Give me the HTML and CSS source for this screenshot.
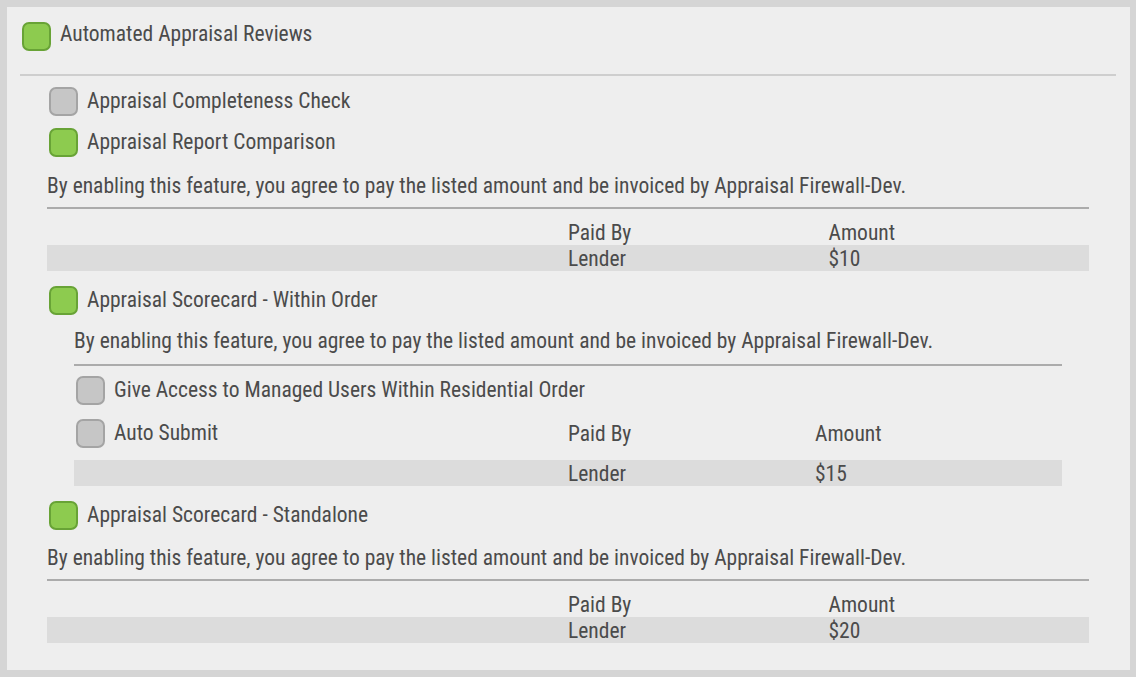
FILE: index.html
```html
<!DOCTYPE html>
<html lang="en">
<head>
<meta charset="utf-8">
<title>Automated Appraisal Reviews</title>
<link rel="stylesheet" href="styles.css">
</head>
<body>
<div class="panel">
  <div class="check-row head">
    <span class="box on"></span>
    <span class="label">Automated Appraisal Reviews</span>
  </div>
  <div class="top-rule"></div>

  <div class="content">
    <div class="check-row r1">
      <span class="box off"></span>
      <span class="label">Appraisal Completeness Check</span>
    </div>
    <div class="check-row r2">
      <span class="box on"></span>
      <span class="label">Appraisal Report Comparison</span>
    </div>
    <p class="note">By enabling this feature, you agree to pay the listed amount and be invoiced by Appraisal Firewall-Dev.</p>
    <div class="rule"></div>
    <div class="fee">
      <div class="fee-row head-row"><span></span><span>Paid By</span><span>Amount</span></div>
      <div class="fee-row data-row"><span></span><span>Lender</span><span>$10</span></div>
    </div>

    <div class="check-row r3">
      <span class="box on"></span>
      <span class="label">Appraisal Scorecard - Within Order</span>
    </div>
    <div class="nested">
      <p class="note">By enabling this feature, you agree to pay the listed amount and be invoiced by Appraisal Firewall-Dev.</p>
      <div class="rule"></div>
      <div class="check-row r-access">
        <span class="box off"></span>
        <span class="label">Give Access to Managed Users Within Residential Order</span>
      </div>
      <div class="fee nested-fee">
        <div class="fee-row head-row tall">
          <span class="check-row"><span class="box off"></span><span class="label">Auto Submit</span></span>
          <span>Paid By</span><span>Amount</span>
        </div>
        <div class="fee-row data-row spaced"><span></span><span>Lender</span><span>$15</span></div>
      </div>
    </div>

    <div class="check-row r4">
      <span class="box on"></span>
      <span class="label">Appraisal Scorecard - Standalone</span>
    </div>
    <p class="note n3">By enabling this feature, you agree to pay the listed amount and be invoiced by Appraisal Firewall-Dev.</p>
    <div class="rule"></div>
    <div class="fee">
      <div class="fee-row head-row"><span></span><span>Paid By</span><span>Amount</span></div>
      <div class="fee-row data-row"><span></span><span>Lender</span><span>$20</span></div>
    </div>
  </div>
</div>
</body>
</html>
```

FILE: styles.css
```css
html, body {
  margin: 0;
  padding: 0;
}
body {
  background: #d5d5d5;
  padding: 7px 6px 7px 7px;
  width: 1136px;
  height: 677px;
  box-sizing: border-box;
  font-family: "Roboto Condensed", "Liberation Sans Narrow", "Arial Narrow", Roboto, sans-serif;
  font-size: 21.5px;
  color: #4b4b4b;
}
.panel {
  background: #eeeeee;
  height: 663px;
  box-sizing: border-box;
  padding: 15px 0 26px 0;
}
.check-row {
  display: flex;
  align-items: center;
  gap: 9px;
  height: 29px;
}
.label {
  line-height: 24px;
  white-space: nowrap;
  position: relative;
  top: -1px;
}
.head .label {
  top: -3px;
}
.box {
  flex: none;
  width: 29px;
  height: 29px;
  box-sizing: border-box;
  border-radius: 7px;
  border: 2px solid;
}
.box.on {
  background: #8dcb4f;
  border-color: #68a336;
}
.box.off {
  background: #c6c6c6;
  border-color: #a4a4a4;
}
.head {
  margin-left: 15px;
}
.top-rule {
  height: 2px;
  background: #cecece;
  margin: 23px 14px 0 13px;
}
.content {
  margin: 0 41px 0 40px;
}
.content > .check-row {
  margin-left: 2px;
}
.r1 { margin-top: 11px; }
.r2 { margin-top: 12px; }
.r3 { margin-top: 15px; }
.r4 { margin-top: 15px; }
.note {
  margin: 17px 0 0 0;
  line-height: 24px;
  white-space: nowrap;
}
.n3 { margin-top: 16px; }
.rule {
  height: 2px;
  background: #ababab;
  margin-top: 9px;
}
.fee {
  margin-top: 10px;
}
.fee-row {
  display: grid;
  grid-template-columns: 2fr 1fr 1fr;
  height: 26px;
  box-sizing: border-box;
  padding-top: 2px;
  line-height: 24px;
  align-items: center;
}
.data-row {
  background: #dcdcdc;
}
.nested {
  margin: 0 27px;
}
.nested .note {
  margin-top: 14px;
}
.nested .rule {
  margin-top: 11px;
}
.r-access {
  margin-top: 10px;
  margin-left: 2px;
}
.nested-fee {
  margin-top: 14px;
}
.tall {
  height: 29px;
  padding-top: 0;
}
.tall .check-row {
  margin-left: 2px;
}
.spaced {
  margin-top: 12px;
}
```
